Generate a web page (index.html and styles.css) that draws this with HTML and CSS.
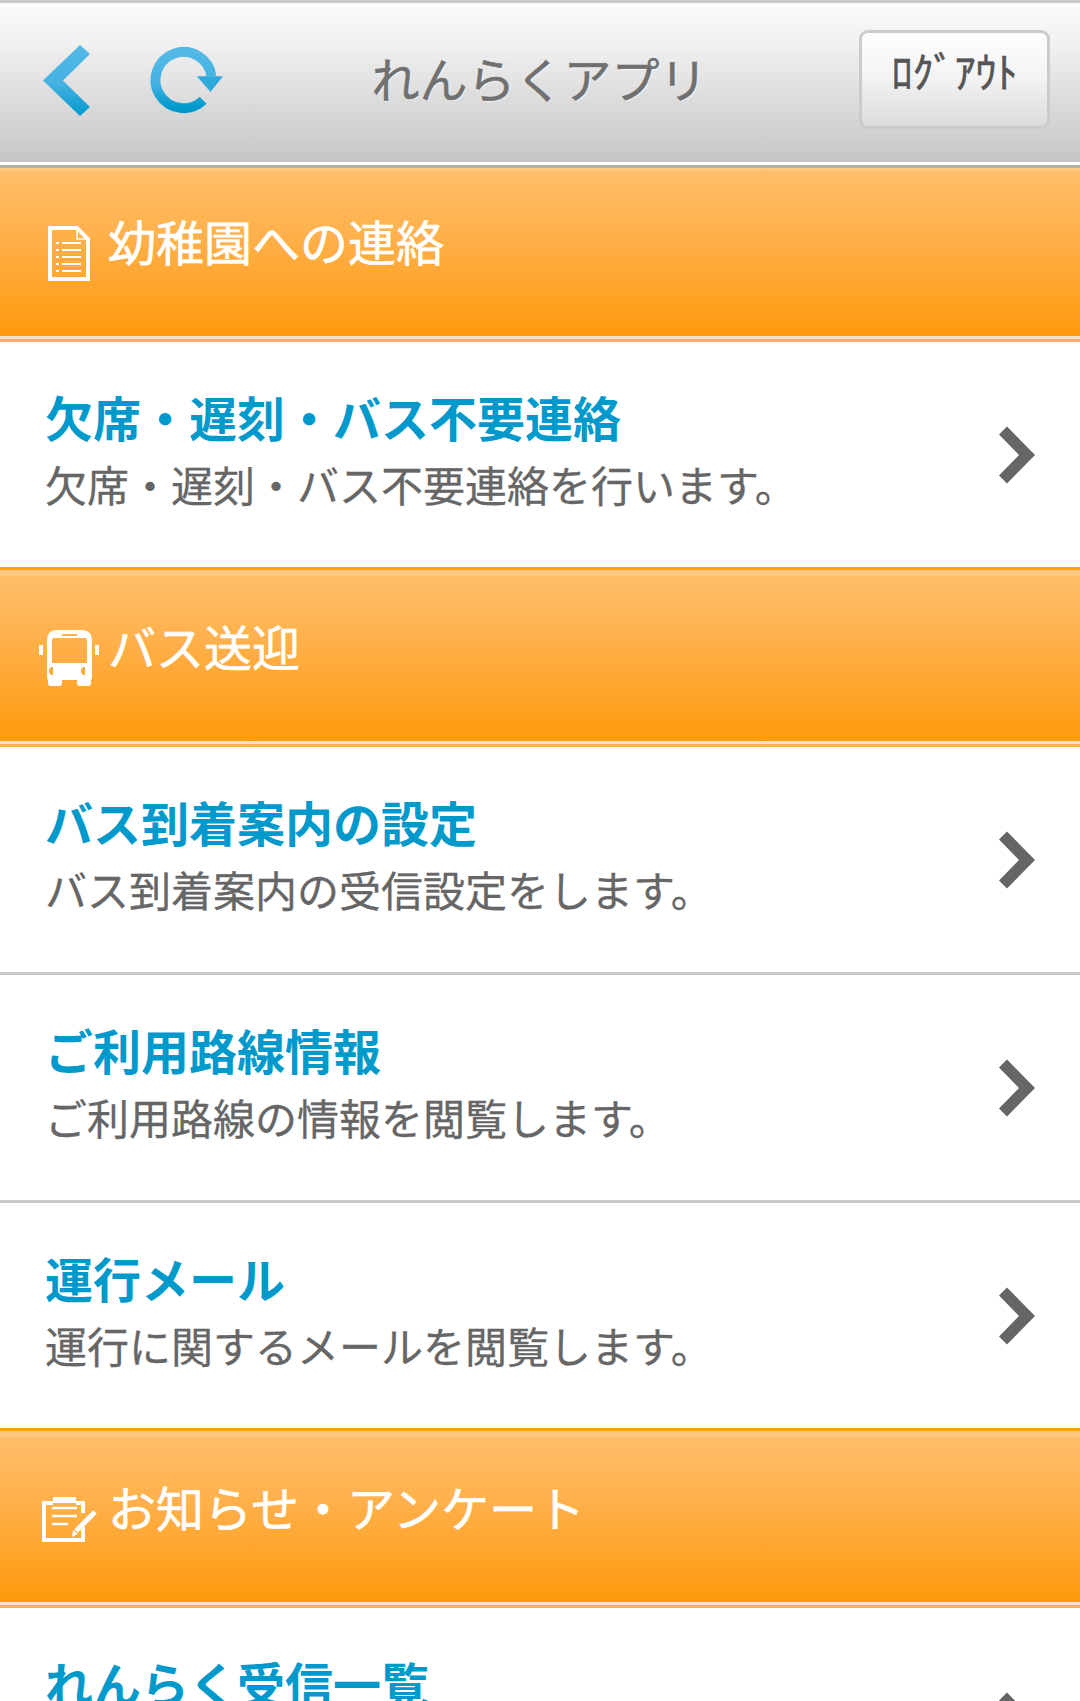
FILE: index.html
```html
<!DOCTYPE html>
<html lang="ja">
<head>
  <meta charset="UTF-8">
  <title>れんらくアプリ</title>
  <meta name="viewport" content="width=device-width, initial-scale=1.0">
  <link rel="stylesheet" href="styles.css">
</head>
<body>
  <!-- Header -->
  <div class="app-header">
    <svg class="back-icon" width="48" height="72" viewBox="0 0 48 72">
      <defs>
        <linearGradient id="blueFade" x1="0" y1="0" x2="0" y2="1">
          <stop offset="0" stop-color="#52b9e6"/>
          <stop offset="0.55" stop-color="#45b2e2"/>
          <stop offset="1" stop-color="#0099cc"/>
        </linearGradient>
      </defs>
      <path d="M0 35.500 37 0 47 9 20 35.500 47 62 37 71Z" fill="url(#blueFade)"/>
    </svg>
    <svg class="reload-icon" width="75" height="75" viewBox="0 0 72 72">
      <path d="M60 31A27 27 0 1 0 52 54" fill="none" stroke="url(#blueFade)" stroke-width="9.500"/>
      <path d="M46 31H71L59 46Z" fill="#2fa8da"/>
    </svg>
    <div class="app-title">れんらくアプリ</div>
    <a class="logout-btn">ﾛｸﾞｱｳﾄ</a>
  </div>

  <!-- 幼稚園への連絡 -->
  <div class="section-bar first">
    <div class="section-inner">
      <svg class="section-icon" width="72" height="72" viewBox="0 0 72 72">
        <path d="M14 11H41L52 22V62H14Z" fill="none" stroke="#fff" stroke-width="4"/>
        <path d="M41 11V22H52" fill="none" stroke="#fff" stroke-width="1.500"/>
        <path d="M20 26H23M26 26H45M20 33H23M26 33H45M20 40H23M26 40H45M20 47H23M26 47H45M20 54H23M26 54H45" stroke="#fff" stroke-width="2"/>
      </svg>
      <div class="section-title">幼稚園への連絡</div>
    </div>
  </div>
  <a class="menu-row">
    <div class="row-text">
      <div class="row-title">欠席・遅刻・バス不要連絡</div>
      <div class="row-desc">欠席・遅刻・バス不要連絡を行います。</div>
    </div>
    <svg class="row-arrow" width="36" height="58" viewBox="0 0 36 58"><path d="M8 0.500 36 29 8 57.500 0 49.500 20 29 0 8.500Z"/></svg>
  </a>

  <!-- バス送迎 -->
  <div class="section-bar">
    <div class="section-inner">
      <svg class="section-icon" width="72" height="72" viewBox="0 0 72 72">
        <path fill-rule="evenodd" fill="#fff" d="M21 8H45Q56 8 56 19V56Q56 58 54 58H13Q11 58 11 56V19Q11 8 21 8ZM16 18V41H51V18Q51 16 49 16H18Q16 16 16 18ZM26 12V14H41V12ZM17 45A4 4 0 1 0 17.010 53ZM49 45A4 4 0 1 0 49.010 53Z"/>
        <path d="M12 57H26V61Q26 64 23 64H15Q12 64 12 61ZM41 57H55V61Q55 64 52 64H44Q41 64 41 61Z" fill="#fff"/>
        <rect x="3" y="23" width="4" height="10" fill="#fff"/>
        <rect x="59" y="23" width="4" height="10" fill="#fff"/>
      </svg>
      <div class="section-title">バス送迎</div>
    </div>
  </div>
  <a class="menu-row">
    <div class="row-text">
      <div class="row-title">バス到着案内の設定</div>
      <div class="row-desc">バス到着案内の受信設定をします。</div>
    </div>
    <svg class="row-arrow" width="36" height="58" viewBox="0 0 36 58"><path d="M8 0.500 36 29 8 57.500 0 49.500 20 29 0 8.500Z"/></svg>
  </a>
  <a class="menu-row">
    <div class="row-text">
      <div class="row-title">ご利用路線情報</div>
      <div class="row-desc">ご利用路線の情報を閲覧します。</div>
    </div>
    <svg class="row-arrow" width="36" height="58" viewBox="0 0 36 58"><path d="M8 0.500 36 29 8 57.500 0 49.500 20 29 0 8.500Z"/></svg>
  </a>
  <a class="menu-row">
    <div class="row-text">
      <div class="row-title">運行メール</div>
      <div class="row-desc">運行に関するメールを閲覧します。</div>
    </div>
    <svg class="row-arrow" width="36" height="58" viewBox="0 0 36 58"><path d="M8 0.500 36 29 8 57.500 0 49.500 20 29 0 8.500Z"/></svg>
  </a>

  <!-- お知らせ・アンケート -->
  <div class="section-bar">
    <div class="section-inner">
      <svg class="section-icon" width="72" height="72" viewBox="0 0 72 72">
        <path d="M17 20H8V57H47V44M40 20H47V30" fill="none" stroke="#fff" stroke-width="4"/>
        <rect x="17" y="14" width="23" height="6" fill="#fff"/>
        <path d="M16 25H41M16 33H41M16 41H32" stroke="#fff" stroke-width="2.500"/>
        <path d="M59 29 40 48" stroke="#fff" stroke-width="5"/>
        <path d="M36 54 37 47 42 51Z" fill="#fff"/>
      </svg>
      <div class="section-title">お知らせ・アンケート</div>
    </div>
  </div>
  <a class="menu-row">
    <div class="row-text">
      <div class="row-title">れんらく受信一覧</div>
    </div>
    <svg class="row-arrow" width="36" height="58" viewBox="0 0 36 58"><path d="M8 0.500 36 29 8 57.500 0 49.500 20 29 0 8.500Z"/></svg>
  </a>
</body>
</html>
```

FILE: styles.css
```css
html, body {
  height: 1701px;
  overflow: hidden;
}
body {
  background: #fff;
  font-family: "Noto Sans CJK JP", "Noto Sans", sans-serif;
  margin: 0;
}
.app-header {
  display: flex;
  align-items: center;
  height: 159px;
  padding: 0 30px 0 43px;
  border-top: 3px solid #c8c8c8;
  border-bottom: 3px solid #fff;
  background: linear-gradient(#fbfbfb, #f1f1f1 25%, #dfdfdf 55%, #c6c6c6);
}
.back-icon {
  flex: none;
  margin-top: -4px;
}
.reload-icon {
  flex: none;
  margin-left: 58px;
  margin-top: -2px;
}
.app-title {
  flex: 1;
  padding: 0 4px 12px 0;
  text-align: center;
  color: #707070;
  font-size: 48px;
  -webkit-text-stroke: 0.5px #707070;
  text-shadow: 1px 1px 1px rgba(255, 255, 255, 0.7);
}
.logout-btn {
  flex: none;
  box-sizing: border-box;
  width: 191px;
  height: 99px;
  margin-top: -7px;
  padding-top: 2px;
  border: 3px solid #cbcbcb;
  border-radius: 9px;
  background: linear-gradient(#fdfdfd, #f4f4f4 45%, #dcdcdc);
  color: #555;
  font-size: 42px;
  -webkit-text-stroke: 0.6px #555;
  line-height: 70px;
  text-align: center;
}
.section-bar {
  border-top: 3px solid #ff9d14;
  border-bottom: 3px solid #ffb347;
}
.section-bar.first {
  border-top-color: #b4b1ab;
}
.section-inner {
  display: flex;
  align-items: flex-start;
  box-sizing: border-box;
  height: 174px;
  padding-left: 36px;
  border-top: 6px solid #fdc87f;
  border-bottom: 3px solid #fde4bd;
  background: linear-gradient(#ffbe69, #ffb04a 40%, #ff9a0c);
}
.section-bar.first .section-inner {
  height: 171px;
  border-top-width: 3px;
}
.section-icon {
  flex: none;
  margin-top: 46px;
}
.section-title {
  margin-top: 33px;
  color: #fff;
  font-size: 48px;
  -webkit-text-stroke: 0.6px #fff;
  line-height: 72px;
}
.menu-row {
  display: flex;
  justify-content: space-between;
  align-items: center;
  height: 225px;
  padding: 0 45px;
  border-top: 3px solid #c8c8c8;
}
.section-bar + .menu-row {
  border-top: none;
}
.row-text {
  align-self: flex-start;
  padding-top: 41px;
}
.row-title {
  color: #0099cc;
  font-size: 48px;
  font-weight: 700;
  line-height: 66px;
}
.row-desc {
  margin-top: 2px;
  color: #666;
  font-size: 42px;
  -webkit-text-stroke: 0.3px #666;
  line-height: 66px;
}
.row-arrow {
  flex: none;
  fill: #666;
}
```
